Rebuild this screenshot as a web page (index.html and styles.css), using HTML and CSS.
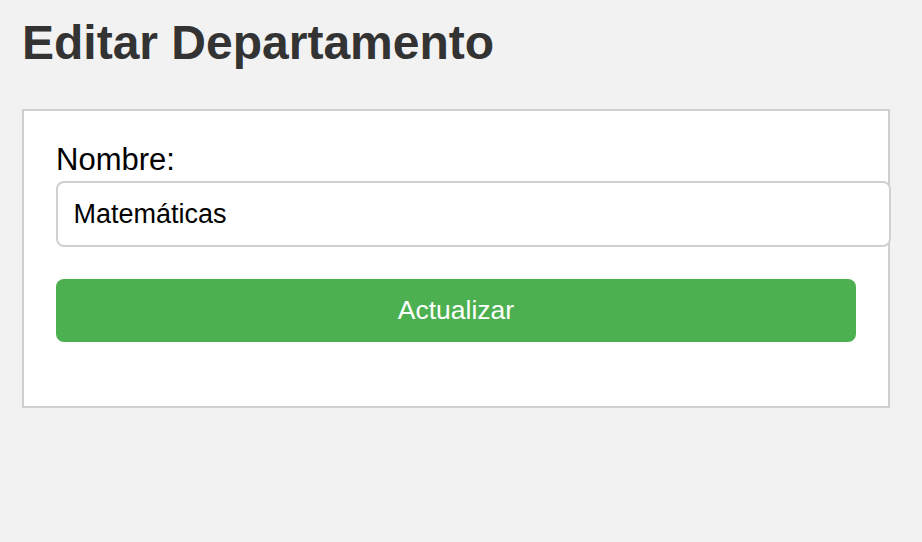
FILE: index.html
```html
<!DOCTYPE html>
<html lang="es">
<head>
<meta charset="utf-8">
<title>Editar Departamento</title>
<link rel="stylesheet" href="styles.css">
</head>
<body>
  <h1 class="title">Editar Departamento</h1>
  <div class="card">
    <form class="form">
      <label class="label" for="nombre">Nombre:</label>
      <input class="input" id="nombre" type="text" value="Matemáticas">
      <button class="btn" type="button">Actualizar</button>
    </form>
  </div>
</body>
</html>
```
FILE: styles.css
```css
html, body {
  margin: 0;
  padding: 0;
}
body {
  background: #f2f2f2;
  font-family: "Liberation Sans", Arial, Helvetica, sans-serif;
  padding: 15px 32px 0 22px;
  color: #000;
}
.title {
  margin: 0 0 39px 0;
  font-size: 48px;
  line-height: 55px;
  font-weight: bold;
  color: #333;
}
.card {
  width: 800px;
  background: #fff;
  border: 2px solid #cfcfcf;
  padding: 32px 32px 64px 32px;
}
.form {
  display: flex;
  flex-direction: column;
  align-items: flex-start;
}
.label {
  display: block;
  font-size: 31px;
  line-height: 34px;
  margin-bottom: 4px;
}
.input {
  box-sizing: content-box;
  width: 100%;
  margin: 0;
  padding: 16px 15.5px;
  border: 2px solid #d0d0d0;
  border-radius: 8px;
  font-family: inherit;
  font-size: 27px;
  line-height: 30px;
  height: 30px;
  color: #000;
  background: #fff;
  outline: none;
}
.btn {
  width: 100%;
  height: 63px;
  margin-top: 32px;
  border: none;
  border-radius: 8px;
  background: #4caf50;
  color: #fff;
  font-family: inherit;
  font-size: 26.5px;
  cursor: pointer;
}
```
